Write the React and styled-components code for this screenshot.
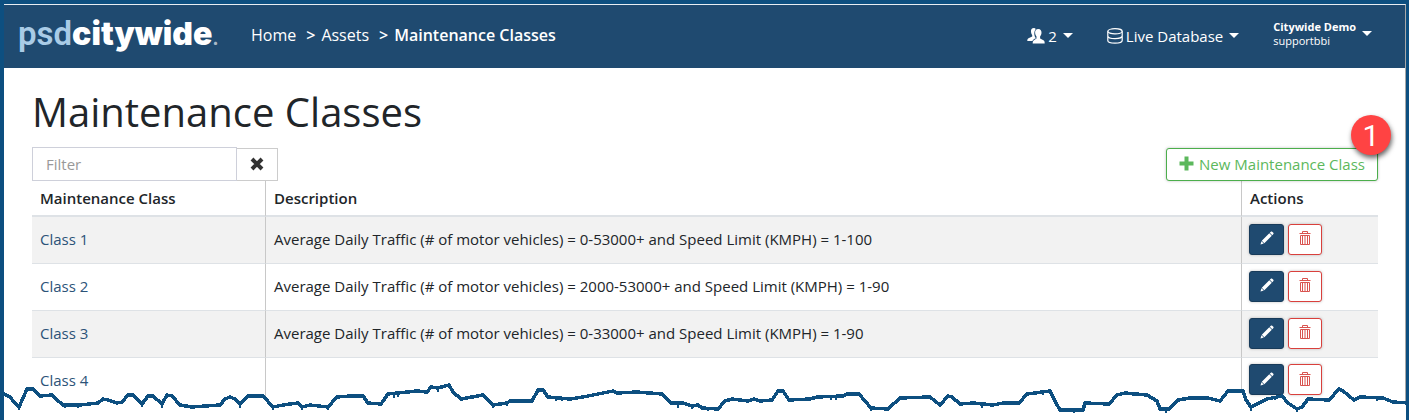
import React from "react"
import { useState } from "react"
import styled, { createGlobalStyle } from "styled-components"

const GlobalStyle = createGlobalStyle`
    *, *::before, *::after {
        box-sizing: border-box;
    }
    body {
        margin: 0;
        background-color: white;
        color: #212529;
        font-family: "Open Sans", "Noto Sans", sans-serif;
        font-size: 15px;
        line-height: 22px;
    }
    button, input {
        font: inherit;
    }
`
const Frame = styled.div`
    position: relative;
    overflow: hidden;
    border: solid #0d4f80;
    border-width: 4px 3px 0 4px;
    padding-bottom: 17px;
`
const Screen = styled.div`
    border-top: 1px solid #e8edf2;
    border-right: 1px solid #a8a8a8;
`
const Header = styled.header`
    display: flex;
    align-items: center;
    height: 63px;
    padding: 0 33px 4px 14px;
    background-color: #1f4a70;
    color: white;
    font-size: 16px;
`
const Logo = styled.a`
    width: 233px;
    padding-top: 3px;
    color: white;
    font-family: Inter, sans-serif;
    font-size: 32px;
    font-weight: 900;
    line-height: 40px;
    text-decoration: none;
`
const LogoPrefix = styled.span`
    color: #a9cbe6;
    font-family: Roboto, sans-serif;
    font-size: 33px;
    font-weight: 600;
`
const LogoDot = styled.span`
    color: #a9b9c8;
    font-size: 16px;
`
const Breadcrumbs = styled.nav`
    display: flex;
    flex: 1;
    gap: 6px;
`
const Crumb = styled.a`
    color: white;
    font-weight: ${props => props.$current ? 600 : 400};
    text-decoration: none;
`
const Separator = styled.span`
    padding-left: 4px;
    font-weight: 600;
`
const HeaderMenus = styled.div`
    display: flex;
    align-items: center;
    gap: 34px;
    font-size: 15px;
`
const MenuButton = styled.button`
    display: flex;
    align-items: center;
    gap: 3px;
    padding: 2px 0 0;
    border: 0;
    background: none;
    color: white;
    text-align: left;

    &::after {
        content: "";
        margin-left: 3px;
        border: 5px solid transparent;
        border-top-color: white;
        border-bottom-width: 0;
    }
    &:last-child {
        padding: 0 0 2px;
    }
`
const Account = styled.span`
    display: flex;
    flex-direction: column;
    font-size: 11px;
    line-height: 14px;
`
const Main = styled.main`
    padding: 20px 27px 0 28px;
`
const Heading = styled.h1`
    margin: 0;
    font-size: 40px;
    font-weight: 400;
    line-height: 48px;
`
const Toolbar = styled.div`
    display: flex;
    align-items: flex-end;
    justify-content: space-between;
    margin-top: 11px;
`
const FilterGroup = styled.div`
    display: flex;
    align-items: flex-end;
`
const FilterInput = styled.input`
    width: 205px;
    height: 34px;
    padding: 0 13px;
    border: 1px solid #ced0da;
    border-radius: 0;
    color: #212529;

    &::placeholder {
        color: #999;
    }
`
const ClearButton = styled.button`
    display: flex;
    align-items: center;
    justify-content: center;
    width: 41px;
    height: 33px;
    padding: 0 0 2px;
    border: 1px solid #ccc;
    border-left: 0;
    background-color: white;
    color: #333;
`
const NewButtonWrapper = styled.div`
    position: relative;
`
const NewButton = styled.button`
    display: flex;
    align-items: center;
    gap: 5px;
    height: 33px;
    padding: 0 12px 2px;
    border: 1px solid #4cae4c;
    border-radius: 3px;
    background-color: white;
    box-shadow: 0 0 3px rgba(0, 0, 0, 0.25);
    color: #5cb85c;
`
const StepBadge = styled.span`
    position: absolute;
    top: -33px;
    right: -13px;
    width: 40px;
    height: 40px;
    border-radius: 50%;
    background-color: #ff4343;
    box-shadow: 1px 3px 5px rgba(0, 0, 0, 0.6);
    color: white;
    font-family: Roboto, sans-serif;
    font-size: 30px;
    line-height: 41px;
    text-align: center;
`
const Table = styled.table`
    width: 100%;
    border-collapse: separate;
    border-spacing: 0;
    table-layout: fixed;
`
const HeadCell = styled.th`
    width: ${props => props.$width};
    height: 36px;
    padding: 0 8px;
    border-right: 1px solid #c8c8c8;
    border-bottom: 2px solid #dee2e6;
    font-weight: 600;
    text-align: left;

    &:last-child {
        border-right: 0;
    }
`
const Row = styled.tr`
    &:nth-child(odd) {
        background-color: #f2f2f2;
    }
    &:last-child {
        background-color: white;
    }
`
const Cell = styled.td`
    height: 47px;
    padding: 0 8px 2px;
    border-right: 1px solid #c8c8c8;
    border-bottom: 1px solid #dee2e6;

    &:last-child {
        border-right: 0;
        padding-left: 7px;
    }
    ${Row}:last-child & {
        height: 45px;
        border-bottom: 0;
    }
`
const ClassLink = styled.a`
    color: #2c5378;
    text-decoration: none;
`
const Actions = styled.div`
    display: flex;
    gap: 4px;
`
const ActionButton = styled.button`
    display: flex;
    align-items: center;
    justify-content: center;
    width: ${props => props.$danger ? "34px" : "35px"};
    height: 31px;
    padding: 0 0 2px;
    border: 1px solid ${props => props.$danger ? "#d9403c" : "#183b5a"};
    border-radius: 3px;
    background-color: ${props => props.$danger ? "white" : "#1f4a70"};
    box-shadow: 0 0 3px rgba(0, 0, 0, 0.25);
    color: ${props => props.$danger ? "#d9534f" : "white"};
`
const TornEdge = styled.svg`
    position: absolute;
    bottom: 0;
    left: -4px;
    width: calc(100% + 7px);
    height: 40px;
    pointer-events: none;
`

const TEAR = "0,13 4,14 10,17 14,22 19,27 27,9 33,9 40,16 52,15 56,19 63,25 80,25 98,23 103,19 108,20 117,23 122,22 128,15 133,15 142,24 148,16 153,16 162,24 167,15 172,16 180,25 192,27 220,25 225,19 230,17 235,19 240,24 248,16 263,16 273,27 283,25 298,23 302,27 310,25 328,27 337,17 350,16 363,16 368,23 381,24 388,14 417,11 427,12 431,7 438,8 449,5 453,12 461,19 483,15 493,25 507,23 510,21 532,21 538,10 543,10 548,17 570,19 583,17 613,11 617,13 637,12 662,14 671,23 683,23 692,26 698,25 702,28 718,29 725,21 732,19 748,21 754,19 760,21 772,20 778,11 783,11 789,20 810,19 817,17 843,16 847,14 859,14 865,21 871,28 888,29 900,18 930,17 940,25 948,16 952,17 960,24 973,23 993,25 1003,23 1019,23 1027,14 1050,11 1055,21 1060,30 1083,30 1085,23 1109,24 1117,15 1125,13 1147,15 1157,21 1160,29 1169,29 1178,20 1190,18 1208,18 1220,21 1228,11 1243,11 1246,20 1251,27 1267,19 1282,16 1288,23 1297,29 1302,27 1308,19 1329,20 1339,9 1343,11 1354,20 1360,17 1383,18 1393,22 1409,23"
const BURRS = "M19 27v3M65 25v3M78 25v3M142 24v3M162 25v3M240 25v3M273 27v3M302 27v3M328 27v3M394 14v4M398 14v3M438 8v4M493 25v3M507 23v3M556 18v3M562 18v3M678 24v4M692 26v3M708 29v2M831 17v3M836 17v3M871 28v3M940 25v2M982 25v3M1043 12v3M1074 30v3M1133 13v3M1166 29v4M1251 27v4M1275 17v3M1297 29v3M1377 18v3"

const classes = [
    {
        name: "Class 1",
        description: "Average Daily Traffic (# of motor vehicles) = 0-53000+ and Speed Limit (KMPH) = 1-100"
    },
    {
        name: "Class 2",
        description: "Average Daily Traffic (# of motor vehicles) = 2000-53000+ and Speed Limit (KMPH) = 1-90"
    },
    {
        name: "Class 3",
        description: "Average Daily Traffic (# of motor vehicles) = 0-33000+ and Speed Limit (KMPH) = 1-90"
    },
    { name: "Class 4", description: "" }
]

function UsersIcon() {
    return (
        <svg width="18" height="16" viewBox="0 0 18 16" fill="currentColor" aria-hidden="true">
            <path d="M7 0C4.700 0 3.800 1.600 4 3.700C4.100 5.300 4.700 6.200 5.200 7V8.600L1.500 10.300C.6 10.800.3 11.500.3 13H5.500C5.900 11.700 7 11.200 9 10.300C7.200 8.300 6.500 4.300 8.700 1C8.300.4 7.800 0 7 0Z" />
            <path d="M11.300 1C8.900 1 7.900 2.800 8.100 5.100C8.200 6.700 8.900 7.800 9.500 8.500V10.600L7.300 12C6.200 12.600 5.700 13.300 5.700 15.500H17.700C17.700 13.300 17.200 12.700 16 12.100L13.100 10.600V8.500C13.700 7.800 14.400 6.700 14.500 5.100C14.700 2.800 13.600 1 11.300 1Z" />
        </svg>
    )
}

function DatabaseIcon() {
    return (
        <svg width="16" height="16" viewBox="0 0 16 16" fill="none" stroke="currentColor" strokeWidth="1.200" aria-hidden="true">
            <ellipse cx="8" cy="3.300" rx="7.200" ry="2.600" />
            <path d="M.8 3.300V12.500C.8 14.200 4.100 15.200 8 15.200S15.200 14.200 15.200 12.500V3.300M.8 7.700C.8 9.400 4.100 10.600 8 10.600S15.200 9.400 15.200 7.700" />
        </svg>
    )
}

function CloseIcon() {
    return (
        <svg width="14" height="14" viewBox="0 0 14 14" fill="none" stroke="currentColor" strokeWidth="4" aria-hidden="true">
            <path d="M2 2L12 12M12 2L2 12" />
        </svg>
    )
}

function PlusIcon() {
    return (
        <svg width="15" height="15" viewBox="0 0 15 15" fill="none" stroke="currentColor" strokeWidth="4" aria-hidden="true">
            <path d="M7.500 .5V14.500M.5 7.500H14.500" />
        </svg>
    )
}

function PencilIcon() {
    return (
        <svg width="14" height="14" viewBox="0 0 14 14" fill="currentColor" aria-hidden="true">
            <path d="M.5 13.500L1.400 10.200L3.800 12.600ZM1.800 9.700L9.300 2.200L11.800 4.700L4.300 12.200ZM9.800 1.700L11.100.6Q11.700.2 12.200.7L13.300 1.800Q13.800 2.300 13.400 2.900L12.300 4.200Z" />
        </svg>
    )
}

function TrashIcon() {
    return (
        <svg width="12" height="14" viewBox="0 0 12 14" fill="none" stroke="currentColor" aria-hidden="true">
            <path d="M.5 2.500H11.500M3.500 2.500V.5H8.500V2.500M1.500 4.500H10.500V13.500H1.500ZM3.500 5V13M6 5V13M8.500 5V13" />
        </svg>
    )
}

export default function App() {
    const [filter, setFilter] = useState("")

    const rowEls = classes
        .filter(item => item.name.toLowerCase().includes(filter.toLowerCase()))
        .map(item => (
            <Row key={item.name}>
                <Cell><ClassLink href="#">{item.name}</ClassLink></Cell>
                <Cell>{item.description}</Cell>
                <Cell>
                    <Actions>
                        <ActionButton type="button" aria-label={`Edit ${item.name}`}>
                            <PencilIcon />
                        </ActionButton>
                        <ActionButton type="button" $danger aria-label={`Delete ${item.name}`}>
                            <TrashIcon />
                        </ActionButton>
                    </Actions>
                </Cell>
            </Row>
        ))

    return (
        <Frame>
            <GlobalStyle />
            <Screen>
                <Header>
                    <Logo href="#"><LogoPrefix>psd</LogoPrefix>citywide<LogoDot>.</LogoDot></Logo>
                    <Breadcrumbs aria-label="Breadcrumb">
                        <Crumb href="#">Home</Crumb>
                        <Separator>&gt;</Separator>
                        <Crumb href="#">Assets</Crumb>
                        <Separator>&gt;</Separator>
                        <Crumb href="#" $current aria-current="page">Maintenance Classes</Crumb>
                    </Breadcrumbs>
                    <HeaderMenus>
                        <MenuButton type="button"><UsersIcon />2</MenuButton>
                        <MenuButton type="button"><DatabaseIcon />Live Database</MenuButton>
                        <MenuButton type="button">
                            <Account>
                                <b>Citywide Demo</b>
                                <span>supportbbi</span>
                            </Account>
                        </MenuButton>
                    </HeaderMenus>
                </Header>
                <Main>
                    <Heading>Maintenance Classes</Heading>
                    <Toolbar>
                        <FilterGroup>
                            <FilterInput
                                type="text"
                                placeholder="Filter"
                                aria-label="Filter"
                                value={filter}
                                onChange={e => setFilter(e.target.value)}
                            />
                            <ClearButton type="button" aria-label="Clear filter" onClick={() => setFilter("")}>
                                <CloseIcon />
                            </ClearButton>
                        </FilterGroup>
                        <NewButtonWrapper>
                            <NewButton type="button"><PlusIcon />New Maintenance Class</NewButton>
                            <StepBadge>1</StepBadge>
                        </NewButtonWrapper>
                    </Toolbar>
                    <Table>
                        <thead>
                            <tr>
                                <HeadCell $width="234px">Maintenance Class</HeadCell>
                                <HeadCell>Description</HeadCell>
                                <HeadCell $width="136px">Actions</HeadCell>
                            </tr>
                        </thead>
                        <tbody>{rowEls}</tbody>
                    </Table>
                </Main>
            </Screen>
            <TornEdge viewBox="0 0 1409 40" preserveAspectRatio="none" shapeRendering="crispEdges" aria-hidden="true">
                <polygon points={`${TEAR} 1409,40 0,40`} fill="white" />
                <polyline points={TEAR} fill="none" stroke="#0d4f80" strokeWidth="3.500" strokeLinejoin="round" />
                <path d={BURRS} stroke="#0d4f80" strokeWidth="2" />
            </TornEdge>
        </Frame>
    )
}
